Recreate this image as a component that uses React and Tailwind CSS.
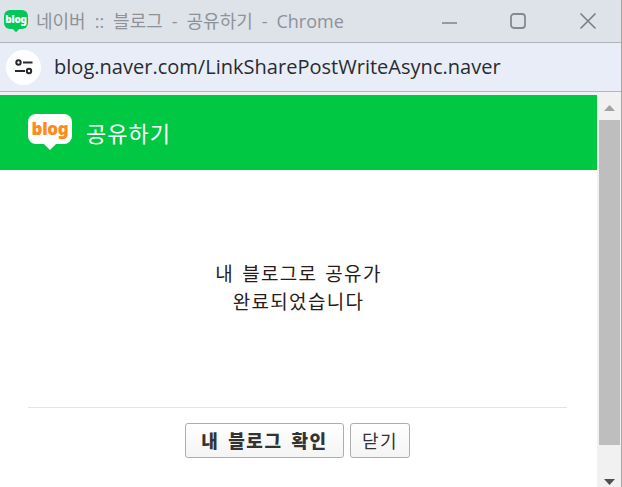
import React from 'react';

const sans = "font-['Open_Sans','Noto_Sans_CJK_KR',sans-serif]";

// Speech bubble logo used in the title bar and the green header
const BlogLogo = ({ bg, fg, boxClass, bodyClass, tailClass, textClass }) => (
  <div className={`relative shrink-0 ${boxClass}`}>
    <div className={`${bg} ${bodyClass} w-full flex items-center justify-center`}>
      <span className={`${fg} ${textClass} font-black leading-none font-['Noto_Sans',sans-serif]`}>blog</span>
    </div>
    <div className={`${bg} ${tailClass} absolute left-1/2 -translate-x-1/2 rotate-45`}></div>
  </div>
);

const Button = ({ className, children }) => (
  <button className={`h-[35px] rounded-[3px] border border-[#adadad] bg-gradient-to-b from-white to-[#f4f4f4] text-[#333] font-['Noto_Sans_CJK_KR',sans-serif] ${className}`}>
    {children}
  </button>
);

export default function App() {
  return (
    <div className="w-[622px] h-[487px] overflow-hidden flex flex-col bg-white border-r border-[#a8a8a8]">
      {/* Window title bar */}
      <div className="h-[43px] shrink-0 flex items-center bg-[#dee3ea] border-b border-[#b0b3b6] pl-1">
        <BlogLogo
          bg="bg-[#03c75a]"
          fg="text-white"
          boxClass="w-[24px] h-[23px]"
          bodyClass="h-[19px] rounded-[6px]"
          tailClass="top-[15px] w-[6px] h-[6px]"
          textClass="text-[10px] tracking-[-0.3px]"
        />
        <span className={`ml-[8px] text-[18px] whitespace-pre text-[#8e9297] [word-spacing:4.3px] ${sans}`}>네이버 :: 블로그 - 공유하기 - Chrome</span>
        <div className="ml-auto flex items-center h-full">
          <svg width="18" height="18" viewBox="0 0 18 18" className="mr-[50px]" fill="none" stroke="#85898d" strokeWidth="1.6">
            <path d="M1 11H16" />
          </svg>
          <svg width="18" height="18" viewBox="0 0 18 18" className="mr-[52px]" fill="none" stroke="#85898d" strokeWidth="1.8">
            <rect x="2" y="2" width="14" height="14" rx="3" />
          </svg>
          <svg width="18" height="18" viewBox="0 0 18 18" className="mr-[24px]" fill="none" stroke="#7b7f83" strokeWidth="1.6">
            <path d="M1.5 1.5L16.5 16.5M16.5 1.5L1.5 16.5" />
          </svg>
        </div>
      </div>

      {/* Address bar */}
      <div className="h-[49px] shrink-0 flex items-center bg-[#e9edf7] border-b border-[#b4b6ba] pl-[6px]">
        <div className="w-[35px] h-[35px] rounded-full bg-white flex items-center justify-center">
          <svg width="20" height="18" viewBox="0 0 20 18" fill="none" stroke="#26282c" strokeWidth="2">
            <circle cx="4.5" cy="4.5" r="2.2" />
            <path d="M9 4.5H18.5" />
            <path d="M1 13H11" />
            <circle cx="15" cy="13" r="2.2" />
          </svg>
        </div>
        <span className={`ml-[13px] text-[20px] tracking-[0.02px] text-[#282c30] ${sans}`}>blog.naver.com/LinkSharePostWriteAsync.naver</span>
      </div>

      {/* Page plus scrollbar */}
      <div className="flex-1 min-h-0 flex flex-col">
        <div className="h-[3px] shrink-0 bg-[#f1f1f1]"></div>
        <div className="flex-1 min-h-0 flex">
          <div className="w-[597px] flex flex-col">
            <div className="h-[75px] shrink-0 bg-[#00c843] flex items-center pl-[28px]">
              <BlogLogo
                bg="bg-white"
                fg="text-[#ff8a1c]"
                boxClass="w-[44px] h-[38px]"
                bodyClass="h-[30px] rounded-[8px]"
                tailClass="top-[24px] w-[10px] h-[10px]"
                textClass="text-[17px] tracking-[-0.3px]"
              />
              <span className="ml-[14px] text-[22px] tracking-[1px] text-white font-['Noto_Sans_CJK_KR',sans-serif]">공유하기</span>
            </div>
            <div className="h-[237px] shrink-0 flex flex-col items-center justify-end pb-[92px] text-[19px] leading-[28px] tracking-[1.3px] [word-spacing:2.5px] text-[#2a1a1a] font-['Noto_Sans_CJK_KR',sans-serif]">
              <p>내 블로그로 공유가</p>
              <p>완료되었습니다</p>
            </div>
            <div className="mx-[28px] w-[539px] border-t border-[#e4e4e4] pt-[15px] flex justify-center gap-[6px]">
              <Button className="w-[159px] text-[18px] font-black tracking-[1.6px] [word-spacing:3px]">내 블로그 확인</Button>
              <Button className="w-[60px] text-[18px] tracking-[1.5px]">닫기</Button>
            </div>
          </div>

          {/* Scrollbar */}
          <div className="w-[24px] bg-[#f1f1f1] flex flex-col items-center">
            <div className="h-[25px] shrink-0 flex items-center justify-center">
              <svg width="11" height="6" viewBox="0 0 11 6" fill="#a3a3a3"><path d="M5.5 0L11 6H0Z" /></svg>
            </div>
            <div className="h-[325px] w-[21px] shrink-0 bg-[#bebebe]"></div>
            <div className="flex-1 flex items-end justify-center pb-[2px]">
              <svg width="11" height="6" viewBox="0 0 11 6" fill="#505050"><path d="M0 0H11L5.5 6Z" /></svg>
            </div>
          </div>
        </div>
      </div>
    </div>
  );
}
